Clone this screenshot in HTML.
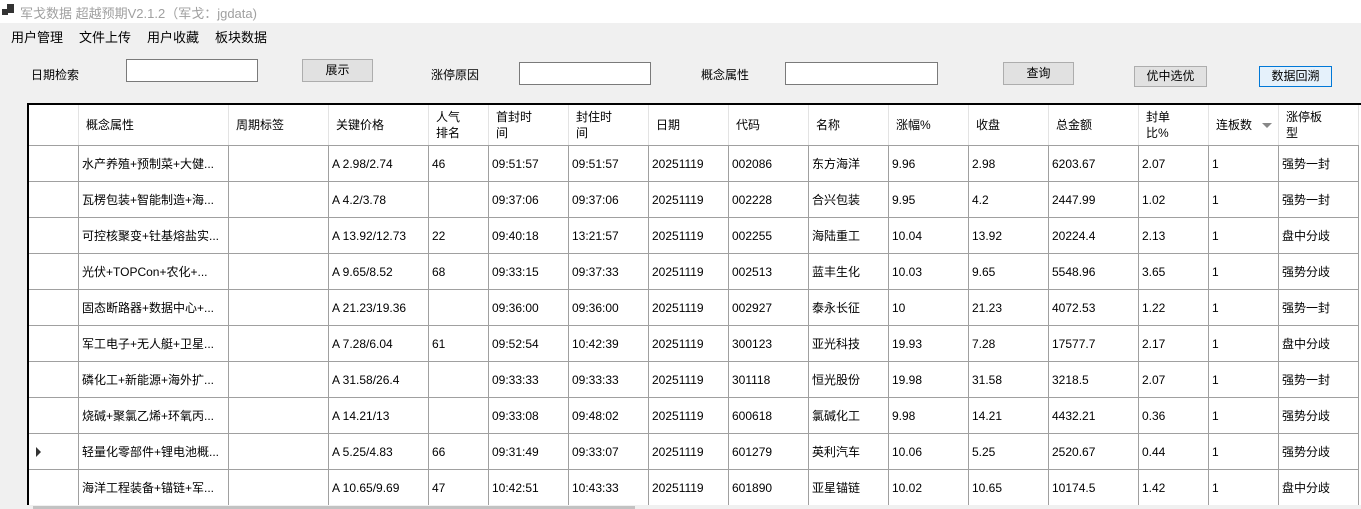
<!DOCTYPE html>
<html><head><meta charset="utf-8"><style>
*{margin:0;padding:0;box-sizing:border-box}
body{width:1361px;height:509px;overflow:hidden;background:#f0f0f0;font-family:"Liberation Sans","Noto Sans CJK SC",sans-serif;font-size:12px;color:#000;position:relative}
.a{position:absolute;white-space:nowrap}
.title{top:0;left:0;width:1361px;height:23px;background:#fff}
.inp{background:#fff;border:1px solid #7a7a7a}
.btn{background:#e1e1e1;border:1px solid #adadad;text-align:center;font-size:13px}
.grid{left:27px;top:103px;width:1334px;height:402px;border-left:2px solid #000;border-top:2px solid #000;background:#fff;overflow:hidden}
table{border-collapse:collapse;table-layout:fixed;position:absolute;left:-1px;top:-1px}
td{height:36px;border:1px solid #a0a0a0;padding-left:3px;overflow:hidden;white-space:nowrap;font-size:12px}
tr.h td{height:41px;border-color:#e3e3e3;border-bottom:1px solid #a0a0a0;padding-left:7px;line-height:16px;white-space:normal}
td.rh{padding:0}
</style></head><body>
<div class="a title"></div>
<div class="a" style="left:2px;top:9px;width:6px;height:6px;background:#333"></div>
<div class="a" style="left:7px;top:4px;width:7px;height:9px;background:#333"></div>
<div class="a" style="left:20px;top:3px;font-size:13px;color:#a0a0a0">军戈数据 超越预期V2.1.2（军戈：jgdata)</div>
<div class="a" style="left:11px;top:27px;font-size:13px">用户管理</div>
<div class="a" style="left:79px;top:27px;font-size:13px">文件上传</div>
<div class="a" style="left:147px;top:27px;font-size:13px">用户收藏</div>
<div class="a" style="left:215px;top:27px;font-size:13px">板块数据</div>

<div class="a" style="left:31px;top:66px;font-size:12px">日期检索</div>
<div class="a inp" style="left:126px;top:59px;width:132px;height:23px"></div>
<div class="a btn" style="left:302px;top:59px;width:71px;height:23px;line-height:21px;font-size:12px">展示</div>
<div class="a" style="left:431px;top:66px;font-size:12px">涨停原因</div>
<div class="a inp" style="left:519px;top:62px;width:132px;height:23px"></div>
<div class="a" style="left:701px;top:66px;font-size:12px">概念属性</div>
<div class="a inp" style="left:785px;top:62px;width:153px;height:23px"></div>
<div class="a btn" style="left:1003px;top:62px;width:71px;height:23px;line-height:21px;font-size:12px">查询</div>
<div class="a btn" style="left:1134px;top:66px;width:73px;height:21px;line-height:19px;font-size:12px">优中选优</div>
<div class="a btn" style="left:1259px;top:66px;width:73px;height:21px;line-height:19px;font-size:12px;background:#e5f1fb;border-color:#0078d7">数据回溯</div>

<div class="a grid">
<table>
<colgroup><col style="width:50px"><col style="width:150px"><col style="width:100px"><col style="width:100px"><col style="width:60px"><col style="width:80px"><col style="width:80px"><col style="width:80px"><col style="width:80px"><col style="width:80px"><col style="width:80px"><col style="width:80px"><col style="width:90px"><col style="width:70px"><col style="width:70px"><col style="width:80px"></colgroup>
<tr class="h"><td class="rh"></td><td>概念属性</td><td>周期标签</td><td>关键价格</td><td>人气<br>排名</td><td>首封时<br>间</td><td>封住时<br>间</td><td>日期</td><td>代码</td><td>名称</td><td>涨幅%</td><td>收盘</td><td>总金额</td><td>封单<br>比%</td><td style="position:relative">连板数<span style="position:absolute;right:6px;top:18px;border-left:5px solid transparent;border-right:5px solid transparent;border-top:5px solid #888"></span></td><td>涨停板<br>型</td></tr>
<tr><td class="rh"></td><td>水产养殖+预制菜+大健...</td><td></td><td>A 2.98/2.74</td><td>46</td><td>09:51:57</td><td>09:51:57</td><td>20251119</td><td>002086</td><td>东方海洋</td><td>9.96</td><td>2.98</td><td>6203.67</td><td>2.07</td><td>1</td><td>强势一封</td></tr>
<tr><td class="rh"></td><td>瓦楞包装+智能制造+海...</td><td></td><td>A 4.2/3.78</td><td></td><td>09:37:06</td><td>09:37:06</td><td>20251119</td><td>002228</td><td>合兴包装</td><td>9.95</td><td>4.2</td><td>2447.99</td><td>1.02</td><td>1</td><td>强势一封</td></tr>
<tr><td class="rh"></td><td>可控核聚变+钍基熔盐实...</td><td></td><td>A 13.92/12.73</td><td>22</td><td>09:40:18</td><td>13:21:57</td><td>20251119</td><td>002255</td><td>海陆重工</td><td>10.04</td><td>13.92</td><td>20224.4</td><td>2.13</td><td>1</td><td>盘中分歧</td></tr>
<tr><td class="rh"></td><td>光伏+TOPCon+农化+...</td><td></td><td>A 9.65/8.52</td><td>68</td><td>09:33:15</td><td>09:37:33</td><td>20251119</td><td>002513</td><td>蓝丰生化</td><td>10.03</td><td>9.65</td><td>5548.96</td><td>3.65</td><td>1</td><td>强势分歧</td></tr>
<tr><td class="rh"></td><td>固态断路器+数据中心+...</td><td></td><td>A 21.23/19.36</td><td></td><td>09:36:00</td><td>09:36:00</td><td>20251119</td><td>002927</td><td>泰永长征</td><td>10</td><td>21.23</td><td>4072.53</td><td>1.22</td><td>1</td><td>强势一封</td></tr>
<tr><td class="rh"></td><td>军工电子+无人艇+卫星...</td><td></td><td>A 7.28/6.04</td><td>61</td><td>09:52:54</td><td>10:42:39</td><td>20251119</td><td>300123</td><td>亚光科技</td><td>19.93</td><td>7.28</td><td>17577.7</td><td>2.17</td><td>1</td><td>盘中分歧</td></tr>
<tr><td class="rh"></td><td>磷化工+新能源+海外扩...</td><td></td><td>A 31.58/26.4</td><td></td><td>09:33:33</td><td>09:33:33</td><td>20251119</td><td>301118</td><td>恒光股份</td><td>19.98</td><td>31.58</td><td>3218.5</td><td>2.07</td><td>1</td><td>强势一封</td></tr>
<tr><td class="rh"></td><td>烧碱+聚氯乙烯+环氧丙...</td><td></td><td>A 14.21/13</td><td></td><td>09:33:08</td><td>09:48:02</td><td>20251119</td><td>600618</td><td>氯碱化工</td><td>9.98</td><td>14.21</td><td>4432.21</td><td>0.36</td><td>1</td><td>强势分歧</td></tr>
<tr><td class="rh" style="position:relative"><span style="position:absolute;left:7px;top:13px;border-top:5px solid transparent;border-bottom:5px solid transparent;border-left:5px solid #333"></span></td><td>轻量化零部件+锂电池概...</td><td></td><td>A 5.25/4.83</td><td>66</td><td>09:31:49</td><td>09:33:07</td><td>20251119</td><td>601279</td><td>英利汽车</td><td>10.06</td><td>5.25</td><td>2520.67</td><td>0.44</td><td>1</td><td>强势分歧</td></tr>
<tr><td class="rh"></td><td>海洋工程装备+锚链+军...</td><td></td><td>A 10.65/9.69</td><td>47</td><td>10:42:51</td><td>10:43:33</td><td>20251119</td><td>601890</td><td>亚星锚链</td><td>10.02</td><td>10.65</td><td>10174.5</td><td>1.42</td><td>1</td><td>盘中分歧</td></tr>
</table>
</div>
<div class="a" style="left:29px;top:505px;width:1332px;height:4px;background:#f0f0f0"></div>
<div class="a" style="left:33px;top:506px;width:602px;height:3px;background:#c2c2c2"></div>
</body></html>
